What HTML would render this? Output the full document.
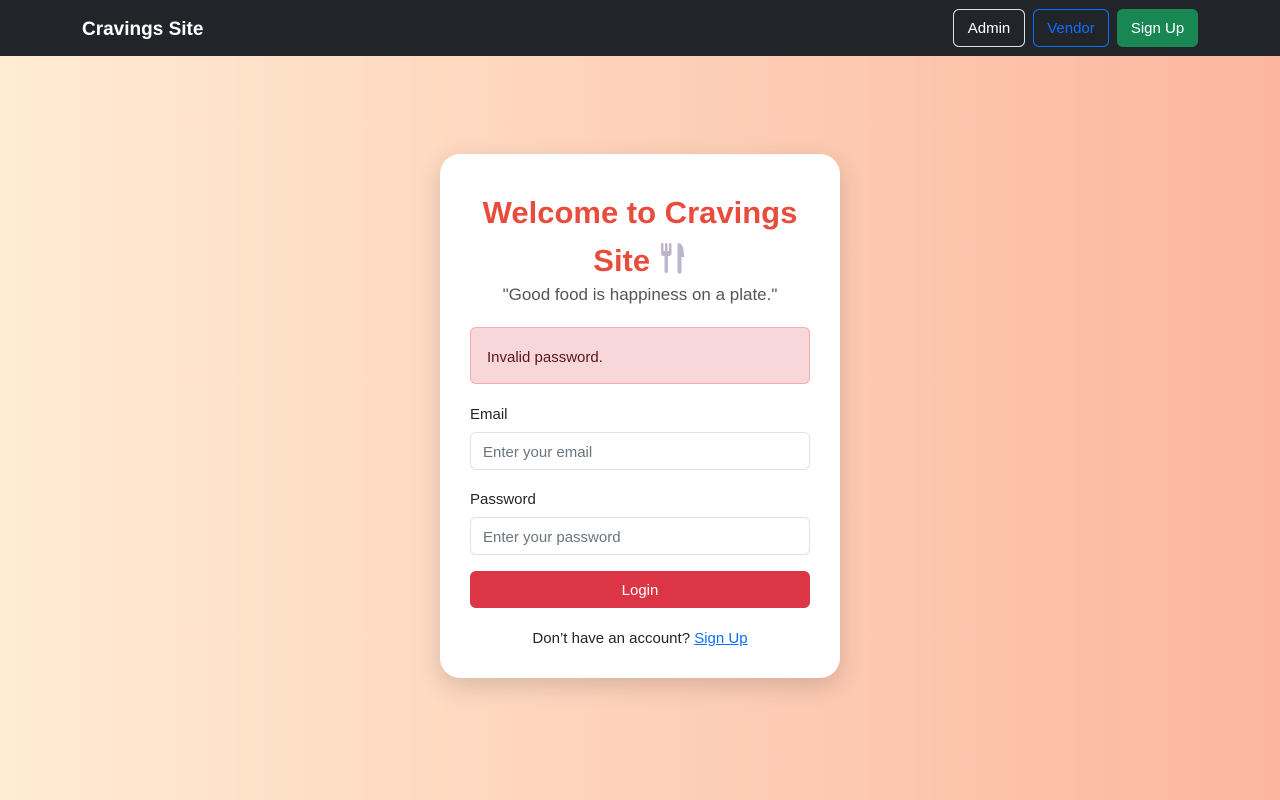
<!DOCTYPE html>
<html><head><meta charset="utf-8"><style>
*{box-sizing:border-box;margin:0;padding:0}
body{width:1280px;height:800px;overflow:hidden;font-family:"Liberation Sans",sans-serif;background:linear-gradient(90deg,#ffecd2,#fcb69f);position:relative}
nav{height:56px;background:#212529;position:relative}
.brand{position:absolute;left:82px;top:19px;color:#fff;font-weight:bold;font-size:19px}
.btn{position:absolute;top:9px;height:38px;border-radius:6px;font-size:15px;line-height:38px;text-align:center}
.card{position:absolute;left:440px;top:154px;width:400px;height:524px;background:#fff;border-radius:20px;box-shadow:0 8px 24px rgba(0,0,0,.15)}
h1{position:absolute;left:0;width:400px;top:35px;text-align:center;color:#e74c3c;font-size:31px;line-height:48px;font-weight:bold}
.sub{position:absolute;top:131px;width:400px;text-align:center;color:#555;font-size:17px}
.alert{position:absolute;left:30px;top:173px;width:340px;height:57px;background:#f8d7da;border:1px solid #f1aeb5;border-radius:6px;color:#58151c;font-size:15px;padding:21px 16px}
.lbl{position:absolute;left:30px;font-size:15px;color:#212529}
.inp{position:absolute;left:30px;width:340px;height:38px;border:1px solid #dee2e6;border-radius:6px;font-size:15px;color:#6c757d;padding:11px 12px}
.login{position:absolute;left:30px;top:417px;width:340px;height:37px;background:#dc3545;border-radius:6px;color:#fff;text-align:center;line-height:40px;font-size:15px}
.foot{position:absolute;top:476px;width:400px;text-align:center;font-size:15px;color:#212529}
.foot a{color:#0d6efd}
</style></head><body>
<nav><div class="brand">Cravings Site</div>
<div class="btn" style="left:953px;width:72px;border:1px solid #dee2e6;color:#fff">Admin</div>
<div class="btn" style="left:1033px;width:76px;border:1px solid #0d6efd;color:#0d6efd">Vendor</div>
<div class="btn" style="left:1117px;width:81px;background:#198754;color:#fff;border:1px solid #198754">Sign Up</div>
</nav>
<div class="card">
<h1>Welcome to Cravings<br>Site <svg width="28" height="34" viewBox="0 0 28 34" style="vertical-align:-4px"><g fill="#bdb5cc"><rect x="2" y="2" width="2.5" height="11" rx="1"/><rect x="6" y="2" width="2.5" height="11" rx="1"/><rect x="10" y="2" width="2.5" height="11" rx="1"/><rect x="2" y="10" width="10.5" height="5" rx="2.5"/><rect x="5.5" y="12" width="3.5" height="20" rx="1.7"/><path d="M19 2c5 0 6 7 6 14h-2.5v14.5a2 2 0 0 1-4 0V3z"/></g></svg></h1>
<div class="sub">"Good food is happiness on a plate."</div>
<div class="alert">Invalid password.</div>
<div class="lbl" style="top:252px">Email</div>
<div class="inp" style="top:278px">Enter your email</div>
<div class="lbl" style="top:337px">Password</div>
<div class="inp" style="top:363px">Enter your password</div>
<div class="login">Login</div>
<div class="foot">Don’t have an account? <a href="#">Sign Up</a></div>
</div>
</body></html>
